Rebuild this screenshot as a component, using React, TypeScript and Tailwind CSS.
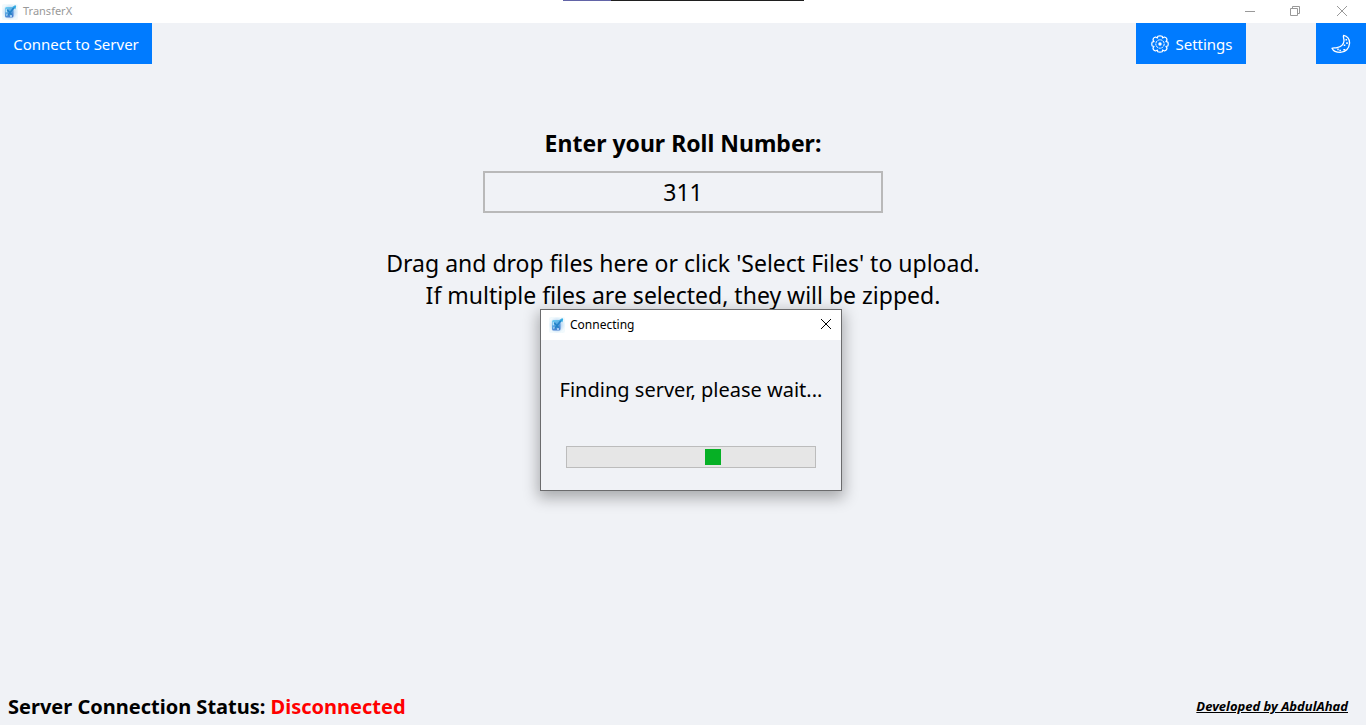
import React, { useState } from "react";

function AppIcon() {
  return (
    <svg width="16" height="16" viewBox="0 0 16 16" aria-hidden="true">
      <defs>
        <radialGradient id="glow">
          <stop offset="0.35" stopColor="#a9cdf0" />
          <stop offset="1" stopColor="#eef8fc" stopOpacity="0.8" />
        </radialGradient>
        <linearGradient id="sheet" x1="0" y1="0" x2="0.4" y2="1">
          <stop offset="0" stopColor="#6fd3f5" />
          <stop offset="1" stopColor="#4a80d0" />
        </linearGradient>
      </defs>
      <rect width="16" height="16" rx="2" fill="url(#glow)" />
      <rect x="3" y="3" width="8.5" height="10.5" rx="1.5" fill="url(#sheet)" />
      <path d="M4.3 5.2v3M4.5 11.5l1-1.5M8 12h2" stroke="#c4e8fb" strokeWidth="1.3" fill="none" />
      <path d="M13.2 2L6 11.2M5.3 5.8l4.4 5" stroke="#2383c8" strokeWidth="1.6" fill="none" />
      <path d="M14 1.7l-3.5 1.8M13.6 2l-.8 3" stroke="#35aee5" strokeWidth="1.2" fill="none" />
    </svg>
  );
}

function GearIcon() {
  return (
    <svg width="18" height="18" viewBox="0 0 18 18" fill="none" stroke="#fff" aria-hidden="true">
      <path
        strokeWidth="1.2"
        strokeLinejoin="round"
        d="M6.8 1.2Q9 .4 11.2 1.2L11.6 3L13.4 2Q16 2.6 16 5L15 6.6L16.8 7Q17.6 9 16.8 11L15 11.4L16 13Q16 15.4 13.4 16L11.6 15L11.2 16.8Q9 17.6 6.8 16.8L6.4 15L4.6 16Q2 15.4 2 13L3 11.4L1.2 11Q.4 9 1.2 7L3 6.6L2 5Q2 2.6 4.6 2L6.4 3Z"
      />
      <circle cx="9" cy="9" r="4.2" strokeWidth="1" strokeDasharray="2.2 .6" />
      <circle cx="9" cy="9" r="1.7" fill="#fff" stroke="none" />
    </svg>
  );
}

function MoonIcon() {
  return (
    <svg width="20" height="20" viewBox="0 0 20 20" fill="none" stroke="#fff" aria-hidden="true">
      <path
        strokeWidth="1.3"
        strokeLinejoin="round"
        d="M12.6 1.3C16.2 1.8 18.8 5 18.6 9C18.2 14.5 14.5 18.4 9.3 18.4C5.5 18.4 2.3 17 1 14.2C2.2 13.4 4 14.1 6 13.6C9.8 12.8 12.6 10.5 13 7C13.2 4.9 11.8 3 12.6 1.3Z"
      />
      <path strokeWidth="1.6" d="M15.3 5v1.6M16 8.3v1.6M13.5 10.6v1.4M12.3 15.7h2M8.5 16.3l1.3.5M6.3 15.4h1.4" />
    </svg>
  );
}

function CloseIcon() {
  return (
    <svg width="10" height="10" viewBox="0 0 10 10" fill="none" stroke="currentColor" aria-hidden="true">
      <path d="M0 0l10 10M10 0L0 10" />
    </svg>
  );
}

function TitleBar() {
  return (
    <header className="flex h-[23px] items-center bg-white pl-[2px] text-[#999999]">
      <AppIcon />
      <span className="flex-1 pl-[5px] text-[11px]">TransferX</span>
      <button aria-label="Minimize" className="flex h-[21px] w-[46px] items-center justify-center self-start">
        <svg width="10" height="10" viewBox="0 0 10 10" stroke="currentColor" aria-hidden="true">
          <path d="M0 5.5h10" />
        </svg>
      </button>
      <button aria-label="Restore" className="flex h-[21px] w-[44px] items-center justify-center self-start">
        <svg width="10" height="10" viewBox="0 0 10 10" fill="none" stroke="currentColor" aria-hidden="true">
          <path d="M.5 2.5h7v7h-7zM2.5 2.5v-2h7v7h-2" />
        </svg>
      </button>
      <button aria-label="Close" className="flex h-[21px] w-[49px] items-center justify-center self-start">
        <CloseIcon />
      </button>
    </header>
  );
}

function ConnectingDialog({ onClose }: { onClose: () => void }) {
  return (
    <section
      role="dialog"
      aria-labelledby="connecting-title"
      className="absolute top-[309px] left-[540px] w-[302px] border border-[#6b6b6d] bg-[#f0f2f6] shadow-[0_5px_14px_2px_rgba(0,0,0,0.3)]"
    >
      <div className="flex h-[30px] items-center bg-white pl-2">
        <AppIcon />
        <h2 id="connecting-title" className="flex-1 pl-[5px] text-[12px]">
          Connecting
        </h2>
        <button aria-label="Close dialog" onClick={onClose} className="flex h-7 w-[30px] items-center justify-center self-start">
          <CloseIcon />
        </button>
      </div>
      <div className="flex h-[150px] flex-col items-center pt-9">
        <p id="connecting-text" className="text-[20px] leading-7 whitespace-nowrap">
          Finding server, please wait...
        </p>
        <div
          role="progressbar"
          aria-labelledby="connecting-text"
          className="mt-[42px] flex h-[22px] w-[250px] items-center border border-[#bcbcbc] bg-[#e6e6e6] pl-[138px]"
        >
          <div className="size-4 bg-[#06b025]" />
        </div>
      </div>
    </section>
  );
}

export default function App() {
  const [open, setOpen] = useState(true);
  const [roll, setRoll] = useState("311");
  return (
    <div className="relative flex min-h-screen flex-col bg-[#f0f2f6] font-['Segoe_UI','Noto_Sans',sans-serif] text-black">
      <div className="absolute top-0 left-[563px] flex h-px w-[241px] bg-[#1f1f1f]">
        <div className="w-12 bg-[#6264a7]" />
      </div>
      <TitleBar />
      <nav className="flex h-[41px] text-[15px] text-white">
        <button className="w-[152px] bg-[#007bff] pt-px">Connect to Server</button>
        <button className="mr-[70px] ml-auto flex w-[110px] items-center justify-center gap-[6px] bg-[#007bff] pt-px pl-[2px]">
          <GearIcon />
          Settings
        </button>
        <button aria-label="Toggle dark mode" className="flex w-[50px] items-center justify-center bg-[#007bff]">
          <MoonIcon />
        </button>
      </nav>
      <main className="flex flex-1 flex-col items-center pt-[63px]">
        <label htmlFor="roll" className="text-[23px] leading-8 font-bold">
          Enter your Roll Number:
        </label>
        <input
          id="roll"
          value={roll}
          onChange={(e) => setRoll(e.target.value)}
          className="mt-3 h-[42px] w-[400px] border-2 border-[#b9b9b9] text-center text-[23px]"
        />
        <p className="mt-[34px] text-center text-[23px] leading-8">
          Drag and drop files here or click 'Select Files' to upload.
          <br />
          If multiple files are selected, they will be zipped.
        </p>
      </main>
      <footer className="flex items-center justify-between pr-[18px] pb-[2px] pl-2">
        <p className="text-[20px] leading-8 font-bold">
          Server Connection Status: <span className="text-[#ff0000]">Disconnected</span>
        </p>
        <a href="#developer" className="text-[13px] font-bold italic underline">
          Developed by AbdulAhad
        </a>
      </footer>
      {open && <ConnectingDialog onClose={() => setOpen(false)} />}
    </div>
  );
}
